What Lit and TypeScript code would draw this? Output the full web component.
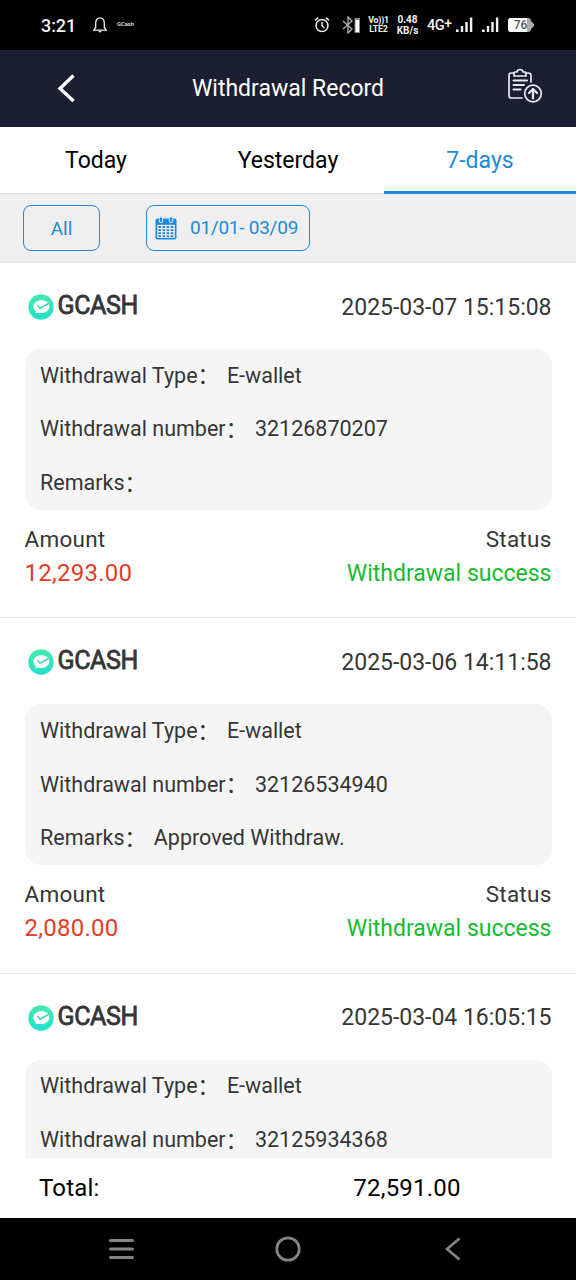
import { LitElement, html, css, svg } from "lit";
import { customElement, property } from "lit/decorators.js";

interface WithdrawalRecord {
  time: string;
  number: string;
  remarks?: string;
  amount?: string;
}

const RECORDS: WithdrawalRecord[] = [
  { time: "2025-03-07 15:15:08", number: "32126870207", remarks: "", amount: "12,293.00" },
  { time: "2025-03-06 14:11:58", number: "32126534940", remarks: "Approved Withdraw.", amount: "2,080.00" },
  { time: "2025-03-04 16:05:15", number: "32125934368" },
];

@customElement("status-bar")
class StatusBar extends LitElement {
  static styles = css`
    :host { display: flex; align-items: center; height: 50px; flex: none; background: #000; color: #f2f2f2; padding: 0 41px; box-sizing: border-box; line-height: 1; white-space: nowrap; }
    svg { display: block; flex: none; }
    .clock { font-size: 18px; font-weight: 500; width: 51px; letter-spacing: -0.1px; padding-top: 2px; }
    .app { font-size: 5.8px; font-weight: 500; margin-left: 9px; flex: 1; }
    .tiny { font-weight: 700; text-align: center; }
    .volte { font-size: 8.8px; line-height: 8.8px; width: 21px; margin-left: 6px; letter-spacing: -0.2px; }
    .speed { font-size: 10px; line-height: 10.5px; width: 23px; margin-left: 7px; padding-top: 1px; }
    .net { font-size: 14.5px; font-weight: 500; margin-left: 8px; width: 28px; display: flex; letter-spacing: -0.4px; padding-top: 2px; }
    .plus { font-size: 14px; line-height: 9px; }
    .batt { margin-left: 8px; }
    .bt { margin-left: 12px; }
    .sig { margin-left: 9px; }
    .sig1 { margin-left: 1px; }
  `;
  private bars(cls: string) {
    return html`<svg class=${cls} width="17" height="18" viewBox="0 0 17 18" fill="#f2f2f2"><rect x="0" y="13.500" width="2.600" height="2.500" /><rect x="4.800" y="10" width="2.400" height="6" /><rect x="9.300" y="6" width="2.400" height="10" /><rect x="13.900" y="1.500" width="2.400" height="14.500" /></svg>`;
  }
  render() {
    return html`
      <span class="clock">3:21</span>
      <svg width="16" height="18" viewBox="0 0 16 18" fill="none" stroke="#f0f0f0" stroke-width="1.3"><path d="M1 14.2h14M2.7 14V12.6L3.7 11.5V6.8C3.7 3.9 5.5 1.8 8 1.8S12.3 3.9 12.3 6.8V11.5L13.3 12.6V14" /><path d="M6.7 15.5h2.6" stroke-width="1.6" /></svg>
      <span class="app">GCash</span>
      <svg width="16" height="18" viewBox="0 0 16 18" fill="none" stroke="#f0f0f0" stroke-width="1.5"><circle cx="8" cy="9.5" r="6" /><path d="M8 6v4l2.4 2M1 4.3 4.2 1.7M15 4.3l-3.2-2.6" /></svg>
      <svg class="bt" width="20" height="18" viewBox="0 0 20 18"><path d="M1 5l9 8-4 4V1l4 4-9 8" fill="none" stroke="#aaa" stroke-width="1.4" /><rect x="12.500" y="2" width="5.500" height="15" fill="#888" /><rect x="13.500" y="4" width="3.500" height="12" fill="#fff" /></svg>
      <div class="tiny volte">Vo))1<br />LTE2</div>
      <div class="tiny speed">0.48<br />KB/s</div>
      <div class="net">4G<span class="plus">+</span></div>
      ${this.bars("sig1")} ${this.bars("sig")}
      <svg class="batt" width="28" height="16" viewBox="0 0 28 16"><path d="M4 1h17q3 0 3 3l3 3v2l-3 3q0 3-3 3H4q-3 0-3-3V4q0-3 3-3" fill="#aaa" /><path d="M4 1h16v14H4q-3 0-3-3V4q0-3 3-3" fill="#fff" /><text x="13.500" y="12.200" font-size="12" font-weight="500" text-anchor="middle" fill="#555">76</text></svg>
    `;
  }
}

@customElement("record-card")
class RecordCard extends LitElement {
  @property({ attribute: false }) record!: WithdrawalRecord;
  static styles = css`
    :host { display: block; flex: none; height: 355.3px; box-sizing: border-box; border-bottom: 1.5px solid #e4e4e4; padding: 0 24.5px; color: #363636; }
    .head { height: 86px; display: flex; align-items: center; justify-content: space-between; font-size: 23px; padding-top: 2px; box-sizing: border-box; }
    .brand { display: flex; align-items: center; gap: 4px; padding-left: 3px; }
    .name { font-size: 25px; letter-spacing: -0.35px; -webkit-text-stroke: 0.8px #363636; line-height: 28px; padding-bottom: 2px; }
    .date { letter-spacing: -0.02px; }
    .box { background: #f5f5f5; border-radius: 16px; height: 161px; display: grid; grid-template-rows: repeat(3, 1fr); padding: 0 15.5px; box-sizing: border-box; font-size: 21.5px; }
    .line { display: flex; align-items: center; line-height: 26px; }
    .colon { width: 22px; margin-right: 7.3px; line-height: 32px; padding-bottom: 3px; font-family: "Noto Sans CJK SC", sans-serif; }
    .foot { display: flex; justify-content: space-between; padding-top: 12px; line-height: 34px; font-size: 22.5px; letter-spacing: 0.25px; }
    .right { text-align: right; }
    .amount { color: #e43d25; font-size: 24px; line-height: 35px; letter-spacing: 0.25px; }
    .ok { color: #16bb32; font-size: 23px; line-height: 35px; letter-spacing: 0; }
  `;
  private line(label: string, value: string) {
    return html`<div class="line"><span>${label}</span><span class="colon">：</span><span>${value}</span></div>`;
  }
  render() {
    const r = this.record;
    return html`
      <div class="head">
        <div class="brand">
          <svg width="26" height="26" viewBox="0 0 26 26">
            <defs><linearGradient id="g" x2="0" y2="1"><stop stop-color="#49e9ac" /><stop offset="1" stop-color="#20e0cb" /></linearGradient></defs>
            <circle cx="13" cy="13" r="12.7" fill="url(#g)" />
            <path d="M13.500 6.300c4.800 0 7.800 2.500 7.800 6 0 3.800-3.300 6.800-7.900 6.800-1.500 0-2.700-.2-3.700-.7L7.500 19.600l.3-2.500C6.300 16 5.400 14.400 5.400 12.700c0-3.700 3.400-6.400 8.100-6.400z" fill="#fff" />
            <path d="M9.300 11.300 12 14.200 20.500 9.500" fill="none" stroke="#36d9b5" stroke-width="1.500" />
          </svg>
          <span class="name">GCASH</span>
        </div>
        <span class="date">${r.time}</span>
      </div>
      <div class="box">
        ${this.line("Withdrawal Type", "E-wallet")}
        ${this.line("Withdrawal number", r.number)}
        ${r.remarks === undefined ? "" : this.line("Remarks", r.remarks)}
      </div>
      ${r.amount
        ? html`<div class="foot">
            <div><div>Amount</div><div class="amount">${r.amount}</div></div>
            <div class="right"><div>Status</div><div class="ok">Withdrawal success</div></div>
          </div>`
        : ""}
    `;
  }
}

@customElement("app-root")
class AppRoot extends LitElement {
  static styles = css`
    :host { display: flex; flex-direction: column; width: 576px; height: 1280px; overflow: hidden; background: #fff; font-family: Roboto, sans-serif; color: #000; }
    svg { display: block; flex: none; }
    .header { height: 77px; flex: none; display: grid; grid-template-columns: 100px 1fr 100px; align-items: center; background: #1c1f31; color: #fff; }
    .title { text-align: center; font-size: 23px; }
    .back { padding-left: 57px; padding-bottom: 2px; }
    .paste { padding-left: 31px; padding-bottom: 6px; }
    .tabs { height: 67px; flex: none; display: grid; grid-template-columns: repeat(3, 1fr); font-size: 23px; line-height: 67px; text-align: center; }
    .tab { box-sizing: border-box; height: 67px; border-bottom: 1px solid #d6d6d6; }
    .active { color: #228ad8; border-bottom: 3px solid #228ad8; }
    .filters { height: 69px; flex: none; background: #efefef; display: flex; align-items: center; gap: 46px; padding: 0 23px; box-sizing: border-box; border-bottom: 1px solid #e6e6e6; color: #228ad8; font-size: 19px; }
    .chip { height: 46px; box-sizing: border-box; border: 1.3px solid #228ad8; border-radius: 8px; display: flex; align-items: center; justify-content: center; }
    .all { width: 77px; }
    .range { width: 164px; gap: 13px; white-space: nowrap; justify-content: flex-start; padding-left: 8px; }
    .dates { letter-spacing: -0.25px; padding-bottom: 2px; }
    .list { flex: 1; min-height: 0; overflow: hidden; display: flex; flex-direction: column; }
    .total { height: 60px; flex: none; display: grid; grid-template-columns: 238px 338px; align-items: center; font-size: 24px; letter-spacing: 0.2px; }
    .label { padding-left: 39px; }
    .sum { text-align: center; }
    .nav { height: 62px; flex: none; background: #000; display: flex; justify-content: space-between; align-items: center; padding: 0 114px 0 108px; }
    .home { margin-right: 3px; }
  `;
  render() {
    return html`
      <status-bar></status-bar>
      <div class="header">
        <div class="back"><svg width="19" height="30" viewBox="0 0 19 30"><path d="M16.500 2.500 3 15.500 16.500 28" fill="none" stroke="#fff" stroke-width="3.400" /></svg></div>
        <div class="title">Withdrawal Record</div>
        <div class="paste">
          <svg width="36" height="36" viewBox="0 0 36 36" fill="none" stroke="#e8ebf5" stroke-width="1.700" stroke-linecap="round" stroke-linejoin="round">
            <path d="M7 5H4.200Q2 5 2 7.200V27.500Q2 30 4.500 30H15M18.500 5h3Q24 5 24 7.500V14" />
            <path d="M7 8V4.800Q7 4 8 4h1.800Q10.500 1.500 13 1.500T16.200 4H18q1 0 1 .8V8z" />
            <path d="M6.500 12.500H20M6.500 17H17M6.500 21.500h7" stroke-width="2" />
            <circle cx="26" cy="25.500" r="8.300" /><path d="M26 30.500v-9M22 25l4-4 4 4" stroke-width="2.200" />
          </svg>
        </div>
      </div>
      <div class="tabs"><div class="tab">Today</div><div class="tab">Yesterday</div><div class="tab active">7-days</div></div>
      <div class="filters">
        <div class="chip all">All</div>
        <div class="chip range">
          <svg width="22" height="24" viewBox="0 0 22 24"><rect x="0.500" y="2.500" width="21" height="21" rx="2" fill="#1f89df" /><rect x="2.200" y="8.800" width="17.600" height="13.200" fill="#efefef" />
            <g>${[0, 1, 2, 3].map((r) => [0, 1, 2, 3].map((c) => svg`<rect x=${3.4 + c * 4.1} y=${10 + r * 3.1} width="2.600" height="2" fill="#1f89df" />`))}</g>
            <rect x="4.300" y="0.800" width="3.400" height="5.800" rx="1.700" fill="#1f89df" stroke="#efefef" stroke-width="1" /><rect x="14.300" y="0.800" width="3.400" height="5.800" rx="1.700" fill="#1f89df" stroke="#efefef" stroke-width="1" /></svg>
          <span class="dates">01/01- 03/09</span>
        </div>
      </div>
      <div class="list">${RECORDS.map((r) => html`<record-card .record=${r}></record-card>`)}</div>
      <div class="total"><span class="label">Total:</span><span class="sum">72,591.00</span></div>
      <div class="nav">
        <svg width="27" height="26" viewBox="0 0 27 26" stroke="#858585" stroke-width="3" stroke-linecap="round"><path d="M2.500 4.500h22M2.500 13h22M2.500 21.500h22" /></svg>
        <svg class="home" width="28" height="28" viewBox="0 0 28 28"><circle cx="14" cy="14" r="11.200" fill="none" stroke="#858585" stroke-width="2.800" /></svg>
        <svg width="18" height="26" viewBox="0 0 18 26"><path d="M15.500 2.500 3 13 15.500 23.500" fill="none" stroke="#858585" stroke-width="2.600" /></svg>
      </div>
    `;
  }
}
